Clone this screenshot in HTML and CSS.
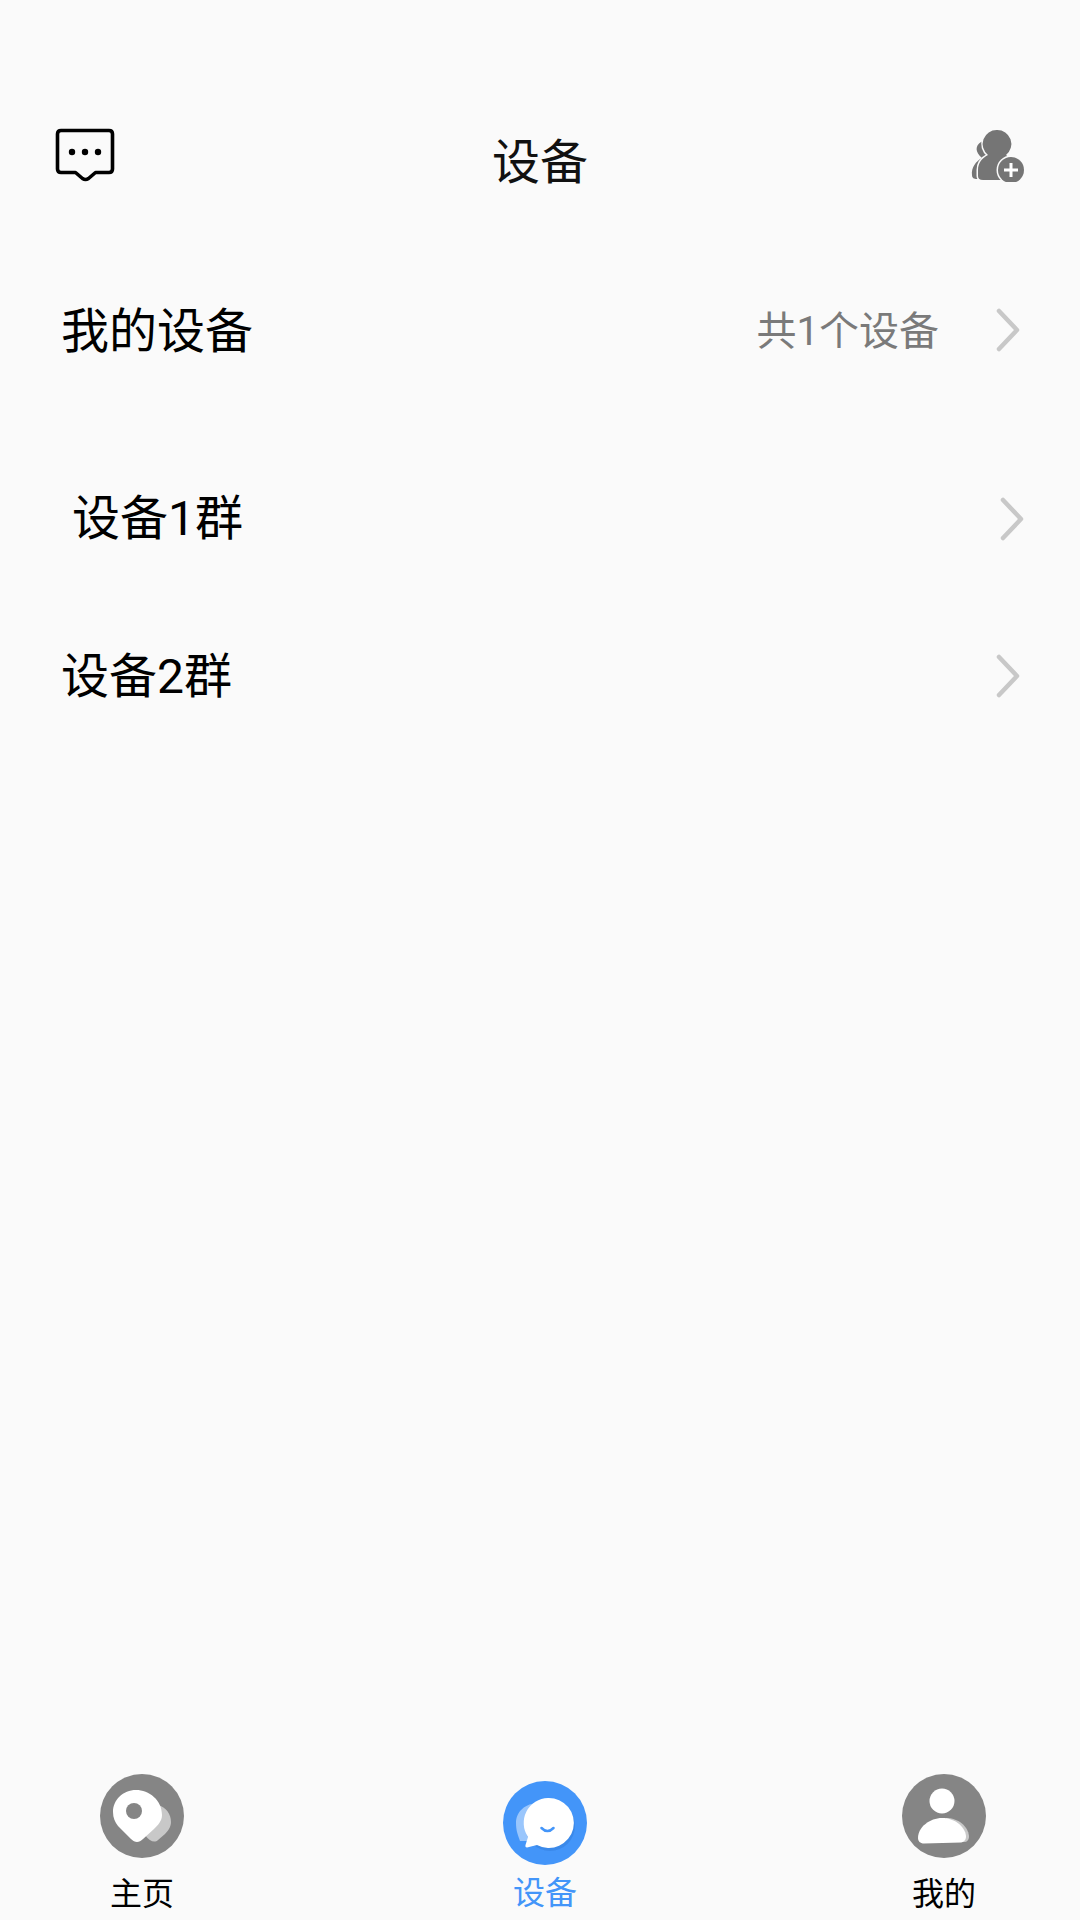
FILE: index.html
```html
<!DOCTYPE html>
<html>
<head>
  <meta charset="utf-8">
  <link rel="stylesheet" href="styles.css">
  <title>设备</title>
</head>
<body>
  <div class="page">
    <header class="top-bar">
      <svg class="top-icon chat-icon" viewBox="0 0 66 56" width="66" height="56">
        <path d="M9 4.5H57Q60.500 4.500 60.500 8V43Q60.500 46.500 57 46.500H43.500L36.500 52.500Q33.500 54.500 30.500 52.500L23.500 46.500H9Q5.500 46.500 5.500 43V8Q5.500 4.500 9 4.500Z" fill="none" stroke="#000" stroke-width="3.600" stroke-linejoin="round"/>
        <circle cx="20" cy="26" r="3.200"/>
        <circle cx="33" cy="26" r="3.200"/>
        <circle cx="46" cy="26" r="3.200"/>
      </svg>
      <h1 class="title">设备</h1>
      <svg class="top-icon add-icon" viewBox="20 18 58 54" width="58" height="54">
        <path d="M31 32C25 36 25 42 32 48C26 51 21 58 22 65C22 68 24 69 27 69H36V30Z" fill="#757575"/>
        <path d="M47 20A14 14 0 0 1 56 45L62 50L52 70H33Q28 70 28 66V60C28 53 32 48 38 45A14 14 0 0 1 47 20Z" fill="#757575" stroke="#fafafa" stroke-width="3" paint-order="stroke"/>
        <circle cx="61" cy="60" r="13" fill="#757575" stroke="#fafafa" stroke-width="3" paint-order="stroke"/>
        <path d="M54 60H68M61 53V67" stroke="#fff" stroke-width="3" fill="none"/>
      </svg>
    </header>

    <section class="rows">
      <div class="row row-mine">
        <span class="row-label">我的设备</span>
        <span class="row-count">共1个设备</span>
        <svg class="chevron" viewBox="0 0 24 44" width="24" height="44"><path d="M3 3L21 22L3 41" fill="none" stroke="#c8c8c8" stroke-width="4.500" stroke-linecap="round" stroke-linejoin="round"/></svg>
      </div>
      <div class="row row-shifted">
        <span class="row-label">设备1群</span>
        <svg class="chevron" viewBox="0 0 24 44" width="24" height="44"><path d="M3 3L21 22L3 41" fill="none" stroke="#c8c8c8" stroke-width="4.500" stroke-linecap="round" stroke-linejoin="round"/></svg>
      </div>
      <div class="row row-last">
        <span class="row-label">设备2群</span>
        <svg class="chevron" viewBox="0 0 24 44" width="24" height="44"><path d="M3 3L21 22L3 41" fill="none" stroke="#c8c8c8" stroke-width="4.500" stroke-linecap="round" stroke-linejoin="round"/></svg>
      </div>
    </section>

    <nav class="tab-bar">
      <div class="tab">
        <svg class="tab-icon" viewBox="0 0 84 84" width="84" height="84">
          <circle cx="42" cy="42" r="42" fill="#858585"/>
          <path d="M58 31C66 33 71 40 71 48C71 53 68 57 65 60L58 66C55 69 50 68 45 61Z" fill="#c8c8c8"/>
          <path d="M36 16C49 16 62 26 62 41C62 47 58 51 54 55L43 65C39 69 35 69 31 65L18 52C15 48 13 44 13 38C13 26 23 16 36 16Z" fill="#fff"/>
          <circle cx="34" cy="37" r="8" fill="#858585"/>
        </svg>
        <span class="tab-label">主页</span>
      </div>
      <div class="tab tab-active">
        <svg class="tab-icon" viewBox="0 0 84 84" width="84" height="84">
          <circle cx="42" cy="42" r="42" fill="#4395f9"/>
          <path d="M36 22C22 22 13 31 13 42C13 50 15 54 17 60L30 60Z" fill="#9ac6fc"/>
          <ellipse cx="47" cy="45" rx="25" ry="25" fill="#3179d6" opacity=".45"/>
          <path d="M45 17A25 25 0 1 1 34 64L24 66.500Q22 66.500 22.500 64L25 56A25 25 0 0 1 45 17Z" fill="#fff"/>
          <path d="M38.500 47Q44.500 53 50.500 47" fill="none" stroke="#4395f9" stroke-width="2.500" stroke-linecap="round"/>
        </svg>
        <span class="tab-label">设备</span>
      </div>
      <div class="tab">
        <svg class="tab-icon" viewBox="0 0 84 84" width="84" height="84">
          <circle cx="42" cy="42" r="42" fill="#858585"/>
          <path d="M44 44C56 44 66 52 67 62C67 66 65 68 62 68H40Z" fill="#c8c8c8"/>
          <circle cx="40" cy="27" r="12.500" fill="#fff"/>
          <path d="M40 44C52 44 63 52 64 62C64 66 62 68 59 68.500L22 69.500C18 69.500 16 67 16 64C16 53 28 44 40 44Z" fill="#fff"/>
        </svg>
        <span class="tab-label">我的</span>
      </div>
    </nav>
  </div>
</body>
</html>
```

FILE: styles.css
```css
html, body {
  margin: 0;
  padding: 0;
}

body {
  background: #fafafa;
  color: #000;
  font-family: Roboto, "Noto Sans CJK SC", sans-serif;
}

.page {
  width: 1080px;
  height: 1920px;
  display: flex;
  flex-direction: column;
  overflow: hidden;
}

.top-bar {
  display: grid;
  grid-template-columns: 1fr auto 1fr;
  align-items: start;
  padding: 126px 52px 0;
}

.top-icon { display: block; }
.chat-icon { justify-self: start; }
.add-icon { justify-self: end; margin-top: 2px; }

.title {
  margin: 6px 0 0;
  font-size: 48px;
  font-weight: 400;
  line-height: 62px;
  color: #111;
}

.rows {
  display: flex;
  flex-direction: column;
  gap: 37px;
  margin-top: 76px;
}

.row {
  display: flex;
  align-items: center;
  height: 120px;
  padding: 0 60px 0 61px;
}

.row-mine { margin-bottom: 32px; }
.row-shifted { padding: 0 56px 0 72px; }

.row-label {
  flex: 1;
  padding-top: 3px;
  font-size: 48px;
  line-height: 60px;
}

.row-shifted .row-label { padding-top: 0; }
.row-last .row-label { padding-top: 1px; }

.row-count {
  margin-right: 57px;
  padding-top: 3px;
  font-size: 40px;
  line-height: 60px;
  color: #7a7a7a;
}

.chevron { display: block; }

.tab-bar {
  display: flex;
  justify-content: space-between;
  margin-top: auto;
  padding: 0 94px 0 100px;
  height: 146px;
}

.tab {
  display: flex;
  flex-direction: column;
  align-items: center;
  width: 84px;
}

.tab-active {
  margin-left: 4px;
  padding-top: 7px;
  color: #4395f9;
}

.tab-active .tab-label { margin-top: 5px; }

.tab-icon { display: block; flex: none; }

.tab-label {
  margin-top: 13px;
  font-size: 32px;
  line-height: 46px;
  white-space: nowrap;
}
```
